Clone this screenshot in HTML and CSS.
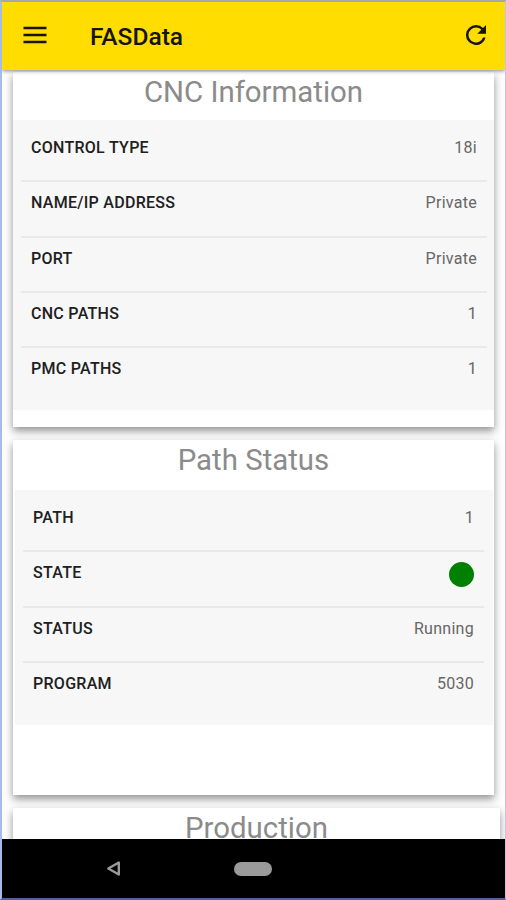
FILE: index.html
```html
<!DOCTYPE html>
<html lang="en">
<head>
<meta charset="utf-8">
<title>FASData</title>
<link rel="stylesheet" href="styles.css">
</head>
<body>
<div class="screen">
  <header class="toolbar">
    <svg class="menu" viewBox="0 0 24 18"><path d="M0.5 2h23M0.5 9h23M0.5 16h23" fill="none" stroke="currentColor" stroke-width="2.4"/></svg>
    <h1 class="app-name">FASData</h1>
    <svg class="refresh" viewBox="4 4 16 16"><path d="M17.65 6.35A7.95 7.95 0 0 0 12 4a8 8 0 1 0 7.73 10h-2.08A6 6 0 1 1 12 6c1.66 0 3.14.69 4.22 1.78L13 11h7V4z" fill="currentColor"/></svg>
  </header>
  <main class="content">
    <section class="card card-info">
      <h2 class="title">CNC Information</h2>
      <dl class="list">
        <div class="row"><dt>CONTROL TYPE</dt><dd>18i</dd></div>
        <div class="row"><dt>NAME/IP ADDRESS</dt><dd>Private</dd></div>
        <div class="row"><dt>PORT</dt><dd>Private</dd></div>
        <div class="row"><dt>CNC PATHS</dt><dd>1</dd></div>
        <div class="row"><dt>PMC PATHS</dt><dd>1</dd></div>
      </dl>
    </section>
    <section class="card card-status">
      <h2 class="title">Path Status</h2>
      <dl class="list">
        <div class="row"><dt>PATH</dt><dd>1</dd></div>
        <div class="row"><dt>STATE</dt><dd><span class="dot"></span></dd></div>
        <div class="row"><dt>STATUS</dt><dd>Running</dd></div>
        <div class="row"><dt>PROGRAM</dt><dd>5030</dd></div>
      </dl>
    </section>
    <section class="card card-production">
      <h2 class="title">Production</h2>
    </section>
  </main>
  <nav class="navbar">
    <svg class="back" viewBox="0 0 15 17"><path d="M12.8 2.5v12L2.3 8.5z" fill="none" stroke="currentColor" stroke-width="2.4" stroke-linejoin="round"/></svg>
    <span class="home"></span>
  </nav>
</div>
</body>
</html>
```
FILE: styles.css
```css
* { box-sizing: border-box; }
body { margin: 0; font-family: Roboto, sans-serif; }
h1, h2, dl, dd { margin: 0; }
.screen {
  display: flex;
  flex-direction: column;
  width: 506px;
  height: 900px;
  overflow: hidden;
  border-style: solid;
  border-width: 2px 1px 2px 2px;
  border-color: #a2a9b0 #b4cbec #5560a0 #a4bce6;
  background: #fdfdfd;
}
.toolbar {
  display: flex;
  align-items: center;
  flex: 0 0 68px;
  padding: 0 19px 2px 21px;
  background: #ffdd00;
  color: #171500;
  box-shadow: 0 1px 4px rgba(0, 0, 0, .45);
  z-index: 1;
}
.menu { width: 24px; height: 18px; }
.app-name {
  flex: 1;
  margin-left: 43px;
  padding-top: 3px;
  font-size: 24.5px;
  line-height: 32px;
  font-weight: 500;
}
.refresh { width: 20px; height: 20px; }
.content {
  display: flex;
  flex-direction: column;
  gap: 13px;
  flex: 1;
  min-height: 0;
  overflow: hidden;
  padding: 2px 11px 0;
}
.card {
  flex: none;
  background: #fff;
  box-shadow: 0 4px 8px rgba(0, 0, 0, .42);
}
.card-info { height: 355px; }
.card-status { height: 355px; }
.card-production { height: 355px; margin-right: -6px; }
.title {
  height: 48px;
  color: #8b8b8b;
  font-size: 29.4px;
  line-height: 40px;
  font-weight: 400;
  text-align: center;
}
.card-status .title { height: 50px; }
.list { background: #f7f7f7; }
.card-info .list { height: 290px; padding: 7px 7px 0 8px; }
.card-status .list {
  height: 235px;
  margin: 0 1px 0 2px;
  padding: 7px 9px 0 8px;
}
.row {
  display: flex;
  justify-content: space-between;
  height: 55.25px;
  padding: 11px 10px 0;
  font-size: 16px;
  line-height: 20px;
  letter-spacing: .28px;
}
.row:not(:last-child) { border-bottom: 2px solid #e9e9e9; }
dt { color: #202020; font-weight: 500; }
dd { color: #666; }
.dot {
  display: block;
  width: 25px;
  height: 25px;
  margin-top: -1px;
  border-radius: 50%;
  background: #008000;
}
.navbar {
  display: grid;
  grid-template-columns: 104px 15px 1fr;
  align-items: center;
  flex: 0 0 59px;
  background: #000;
  color: #9b9b9b;
}
.back { grid-column: 2; width: 15px; height: 17px; }
.home {
  width: 38px;
  height: 14px;
  margin-left: 113px;
  border-radius: 7px;
  background: #9b9b9b;
}
```
